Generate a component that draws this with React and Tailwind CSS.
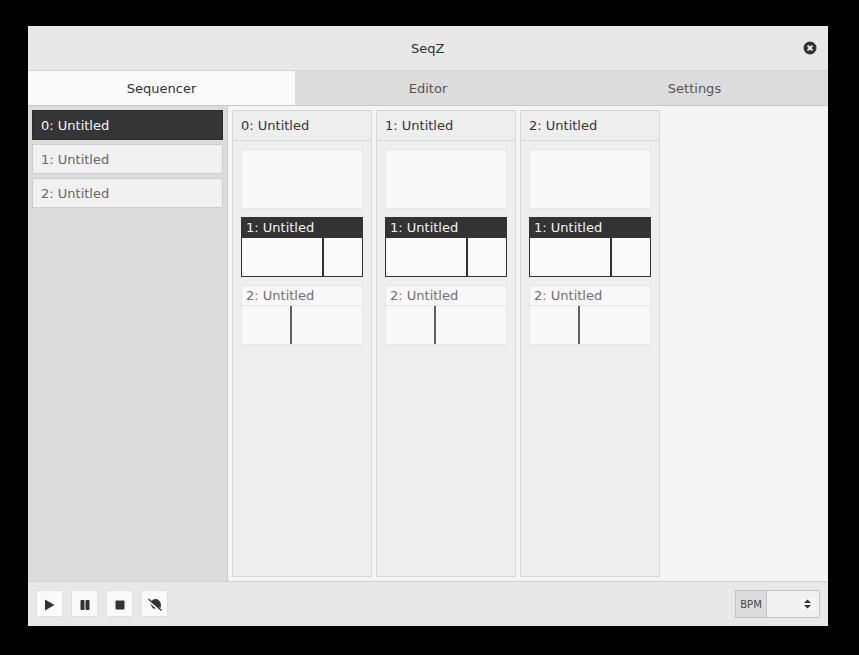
const font = { fontFamily: '"DejaVu Sans", sans-serif' }

function SidebarItem({ label, active }) {
  return (
    <div
      className={
        active
          ? "h-[30px] flex items-center px-2 pt-[2px] border border-[#2b2b2b] bg-[#353535] text-[#f5f5f5]"
          : "h-[30px] flex items-center px-2 pt-[2px] border border-[#cdcdcd] bg-[#f1f1f1] text-[#666666]"
      }
    >
      {label}
    </div>
  )
}

function Column({ label }) {
  return (
    <div className="w-[140px] flex flex-col border border-[#d6d6d6] bg-[#eeeeee]">
      <div className="h-[30px] shrink-0 flex items-center px-2 border-b border-[#d6d6d6] text-[#333333]">{label}</div>
      <div className="flex flex-col gap-2 px-2 pt-2">
        <div className="h-[60px] border border-[#e6e6e6] bg-[#f8f8f8]" />

        <div className="h-[60px] flex flex-col">
          <div className="h-[21px] shrink-0 flex items-center px-[5px] bg-[#333333] text-[#f5f5f5]">1: Untitled</div>
          <div className="flex-1 flex border border-t-0 border-[#333333] bg-[#fafafa]">
            <div className="w-[82px] border-r-2 border-[#333333]" />
          </div>
        </div>

        <div className="h-[60px] flex flex-col border border-[#e6e6e6] bg-[#f8f8f8]">
          <div className="h-[20px] shrink-0 flex items-center px-1 border-b border-[#e6e6e6] text-[#707070]">2: Untitled</div>
          <div className="flex-1 flex">
            <div className="w-[50px] border-r-2 border-[#5e5e5e]" />
          </div>
        </div>
      </div>
    </div>
  )
}

function ToolButton({ children }) {
  return (
    <button className="w-[27px] h-[27px] pt-[3px] flex items-center justify-center border border-[#e0e0e0] bg-[#fafafa] text-[#333333]">
      {children}
    </button>
  )
}

export default function App() {
  const names = ["0: Untitled", "1: Untitled", "2: Untitled"]

  return (
    <div className="w-[859px] h-[655px] bg-black pt-[26px] pl-[28px] overflow-hidden text-[13px]" style={font}>
      <div className="w-[800px] h-[600px] flex flex-col bg-[#e8e8e8]">
        <div className="h-[45px] shrink-0 flex items-center justify-between border-b border-[#d4d4d4] pl-[383px] pr-[11px]">
          <span className="pt-[2px] text-[#333333]">SeqZ</span>
          <svg width="14" height="14" viewBox="0 0 14 14">
            <circle cx="7" cy="7" r="6.5" fill="#333333" />
            <path d="M4.6 4.6 L9.4 9.4 M9.4 4.6 L4.6 9.4" stroke="#f0f0f0" strokeWidth="2" />
          </svg>
        </div>

        <div className="h-[35px] shrink-0 flex border-b border-[#c8c8c8] bg-[#dcdcdc]">
          <div className="w-[267px] pt-[2px] flex items-center justify-center bg-[#fafafa] text-[#333333]">Sequencer</div>
          <div className="w-[266px] pt-[2px] flex items-center justify-center text-[#555555]">Editor</div>
          <div className="w-[267px] pt-[2px] flex items-center justify-center text-[#555555]">Settings</div>
        </div>

        <div className="flex-1 flex min-h-0">
          <div className="w-[200px] shrink-0 flex flex-col gap-1 p-1 pr-[4px] border-r border-[#c8c8c8] bg-[#dcdcdc]">
            <SidebarItem label={names[0]} active />
            <SidebarItem label={names[1]} />
            <SidebarItem label={names[2]} />
          </div>
          <div className="flex-1 flex gap-1 p-1 bg-[#f5f5f5]">
            {names.map((n) => (
              <Column key={n} label={n} />
            ))}
          </div>
        </div>

        <div className="h-[45px] shrink-0 flex items-center justify-between border-t border-[#d0d0d0] pl-2 pr-2">
          <div className="flex gap-2 mb-[1px]">
            <ToolButton>
              <svg width="12" height="12" viewBox="0 0 12 12" fill="currentColor">
                <path d="M1 0.5 L10.5 6 L1 11.5 Z" />
              </svg>
            </ToolButton>
            <ToolButton>
              <svg width="12" height="12" viewBox="0 0 12 12" fill="currentColor">
                <rect x="1.5" y="1" width="4" height="10" rx="1" />
                <rect x="6.5" y="1" width="4" height="10" rx="1" />
              </svg>
            </ToolButton>
            <ToolButton>
              <svg width="12" height="12" viewBox="0 0 12 12" fill="currentColor">
                <rect x="1.5" y="1.5" width="9" height="9" rx="1" />
              </svg>
            </ToolButton>
            <ToolButton>
              <svg width="14" height="14" viewBox="0 0 14 14" fill="currentColor">
                <path d="M3 3.5 C4.5 1.8 6 1 7.5 1 C10.5 1 12.5 3.5 13 7 L12.5 10 L9.5 9 Z" />
                <path d="M2 5.5 L8 10.5 L5 10.5 Z" />
                <path d="M0.5 1 L13.5 12.5" stroke="currentColor" strokeWidth="1.3" />
              </svg>
            </ToolButton>
          </div>

          <div className="w-[85px] h-[28px] flex border border-[#c4c4c4] bg-[#f1f1f1]">
            <div className="w-[31px] flex items-center justify-center border-r border-[#c4c4c4] bg-[#dcdcdc] text-[10px] text-[#444444]">BPM</div>
            <div className="flex-1 flex items-center justify-end pr-[4px]">
              <div className="w-[15px] h-[12px] flex items-center justify-center bg-[#f5f5f5]">
                <svg width="9" height="12" viewBox="0 0 9 12" fill="#333333">
                  <path d="M4.5 1.5 L8 5 L1 5 Z M4.5 10.5 L1 7 L8 7 Z" />
                </svg>
              </div>
            </div>
          </div>
        </div>
      </div>
    </div>
  )
}
